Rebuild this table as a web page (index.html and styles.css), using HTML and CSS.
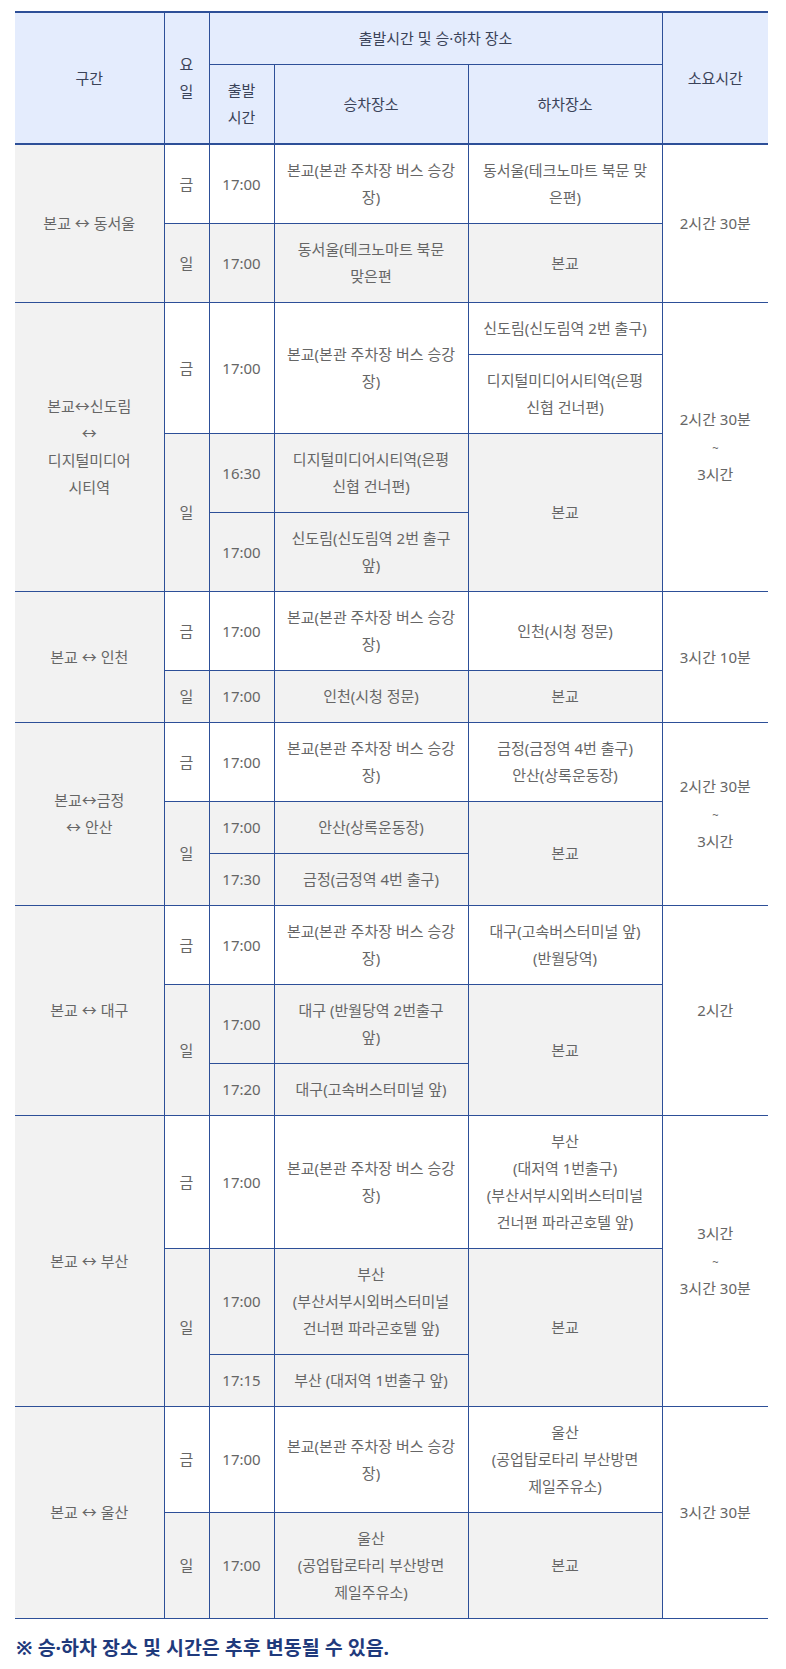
FILE: index.html
```html
<!DOCTYPE html>
<html lang="ko">
<head>
<meta charset="utf-8">
<title>셔틀버스 운행 안내</title>
<link rel="stylesheet" href="styles.css">
</head>
<body>
<div class="wrap">
<table class="bus">
  <colgroup>
    <col class="c-route"><col class="c-day"><col class="c-time"><col class="c-on"><col class="c-off"><col class="c-dur">
  </colgroup>
  <thead>
    <tr>
      <th rowspan="2">구간</th>
      <th rowspan="2">요<br>일</th>
      <th colspan="3">출발시간 및 승·하차 장소</th>
      <th rowspan="2">소요시간</th>
    </tr>
    <tr>
      <th>출발<br>시간</th>
      <th>승차장소</th>
      <th>하차장소</th>
    </tr>
  </thead>
  <tbody>
    <tr>
      <td rowspan="2" class="route">본교 ↔ 동서울</td>
      <td>금</td>
      <td>17:00</td>
      <td>본교(본관 주차장 버스 승강<br>장)</td>
      <td>동서울(테크노마트 북문 맞<br>은편)</td>
      <td rowspan="2">2시간 30분</td>
    </tr>
    <tr class="sun">
      <td>일</td>
      <td>17:00</td>
      <td>동서울(테크노마트 북문<br>맞은편</td>
      <td>본교</td>
    </tr>
  </tbody>
  <tbody>
    <tr>
      <td rowspan="4" class="route">본교↔신도림<br>↔<br>디지털미디어<br>시티역</td>
      <td rowspan="2">금</td>
      <td rowspan="2">17:00</td>
      <td rowspan="2">본교(본관 주차장 버스 승강<br>장)</td>
      <td>신도림(신도림역 2번 출구)</td>
      <td rowspan="4">2시간 30분<br><span class="tilde">~</span><br>3시간</td>
    </tr>
    <tr>
      <td>디지털미디어시티역(은평<br>신협 건너편)</td>
    </tr>
    <tr class="sun">
      <td rowspan="2">일</td>
      <td>16:30</td>
      <td>디지털미디어시티역(은평<br>신협 건너편)</td>
      <td rowspan="2">본교</td>
    </tr>
    <tr class="sun">
      <td>17:00</td>
      <td>신도림(신도림역 2번 출구<br>앞)</td>
    </tr>
  </tbody>
  <tbody>
    <tr>
      <td rowspan="2" class="route">본교 ↔ 인천</td>
      <td>금</td>
      <td>17:00</td>
      <td>본교(본관 주차장 버스 승강<br>장)</td>
      <td>인천(시청 정문)</td>
      <td rowspan="2">3시간 10분</td>
    </tr>
    <tr class="sun">
      <td>일</td>
      <td>17:00</td>
      <td>인천(시청 정문)</td>
      <td>본교</td>
    </tr>
  </tbody>
  <tbody>
    <tr>
      <td rowspan="3" class="route">본교↔금정<br>↔ 안산</td>
      <td>금</td>
      <td>17:00</td>
      <td>본교(본관 주차장 버스 승강<br>장)</td>
      <td>금정(금정역 4번 출구)<br>안산(상록운동장)</td>
      <td rowspan="3">2시간 30분<br><span class="tilde">~</span><br>3시간</td>
    </tr>
    <tr class="sun">
      <td rowspan="2">일</td>
      <td>17:00</td>
      <td>안산(상록운동장)</td>
      <td rowspan="2">본교</td>
    </tr>
    <tr class="sun">
      <td>17:30</td>
      <td>금정(금정역 4번 출구)</td>
    </tr>
  </tbody>
  <tbody>
    <tr>
      <td rowspan="3" class="route">본교 ↔ 대구</td>
      <td>금</td>
      <td>17:00</td>
      <td>본교(본관 주차장 버스 승강<br>장)</td>
      <td>대구(고속버스터미널 앞)<br>(반월당역)</td>
      <td rowspan="3">2시간</td>
    </tr>
    <tr class="sun">
      <td rowspan="2">일</td>
      <td>17:00</td>
      <td>대구 (반월당역 2번출구<br>앞)</td>
      <td rowspan="2">본교</td>
    </tr>
    <tr class="sun">
      <td>17:20</td>
      <td>대구(고속버스터미널 앞)</td>
    </tr>
  </tbody>
  <tbody>
    <tr>
      <td rowspan="3" class="route">본교 ↔ 부산</td>
      <td>금</td>
      <td>17:00</td>
      <td>본교(본관 주차장 버스 승강<br>장)</td>
      <td>부산<br>(대저역 1번출구)<br>(부산서부시외버스터미널<br>건너편 파라곤호텔 앞)</td>
      <td rowspan="3">3시간<br><span class="tilde">~</span><br>3시간 30분</td>
    </tr>
    <tr class="sun">
      <td rowspan="2">일</td>
      <td>17:00</td>
      <td>부산<br>(부산서부시외버스터미널<br>건너편 파라곤호텔 앞)</td>
      <td rowspan="2">본교</td>
    </tr>
    <tr class="sun">
      <td>17:15</td>
      <td>부산 (대저역 1번출구 앞)</td>
    </tr>
  </tbody>
  <tbody>
    <tr>
      <td rowspan="2" class="route">본교 ↔ 울산</td>
      <td>금</td>
      <td>17:00</td>
      <td>본교(본관 주차장 버스 승강<br>장)</td>
      <td>울산<br>(공업탑로타리 부산방면<br>제일주유소)</td>
      <td rowspan="2">3시간 30분</td>
    </tr>
    <tr class="sun">
      <td>일</td>
      <td>17:00</td>
      <td>울산<br>(공업탑로타리 부산방면<br>제일주유소)</td>
      <td>본교</td>
    </tr>
  </tbody>
</table>
<p class="note">※ 승·하차 장소 및 시간은 추후 변동될 수 있음.</p>
</div>
</body>
</html>
```

FILE: styles.css
```css
html, body {
  margin: 0;
  padding: 0;
  background: #ffffff;
}

.wrap {
  padding: 11px 0 0 15px;
  font-family: "Noto Sans", "Noto Sans CJK KR", sans-serif;
}

.bus {
  width: 753px;
  table-layout: fixed;
  border-collapse: collapse;
  border-top: 2px solid #2d4f98;
  border-bottom: 1px solid #2d4f98;
  font-size: 15px;
  line-height: 27px;
  color: #666666;
}

.c-route { width: 149px; }
.c-day { width: 45px; }
.c-time { width: 65px; }
.c-on { width: 194px; }
.c-off { width: 194px; }
.c-dur { width: 106px; }

.bus th,
.bus td {
  padding: 12px 4px;
  text-align: center;
  vertical-align: middle;
  border: 1px solid #2d4f98;
  font-weight: 400;
}

.bus th:first-child,
.bus td.route {
  border-left: none;
}

.bus th:last-child,
.bus tr > td[rowspan]:last-child {
  border-right: none;
}

.bus thead th {
  background: #e4ecfd;
  color: #3a4258;
}

.bus thead {
  border-bottom: 2px solid #2d4f98;
}

.bus td {
  background: #ffffff;
}

.bus td.route {
  background: #f2f2f2;
}

.bus tr.sun td {
  background: #f2f2f2;
}

.tilde {
  font-size: 11px;
  line-height: 27px;
}

.note {
  margin: 15px 0 0 1px;
  font-size: 19.5px;
  line-height: 27px;
  font-weight: 700;
  color: #1f3a7c;
}
```
